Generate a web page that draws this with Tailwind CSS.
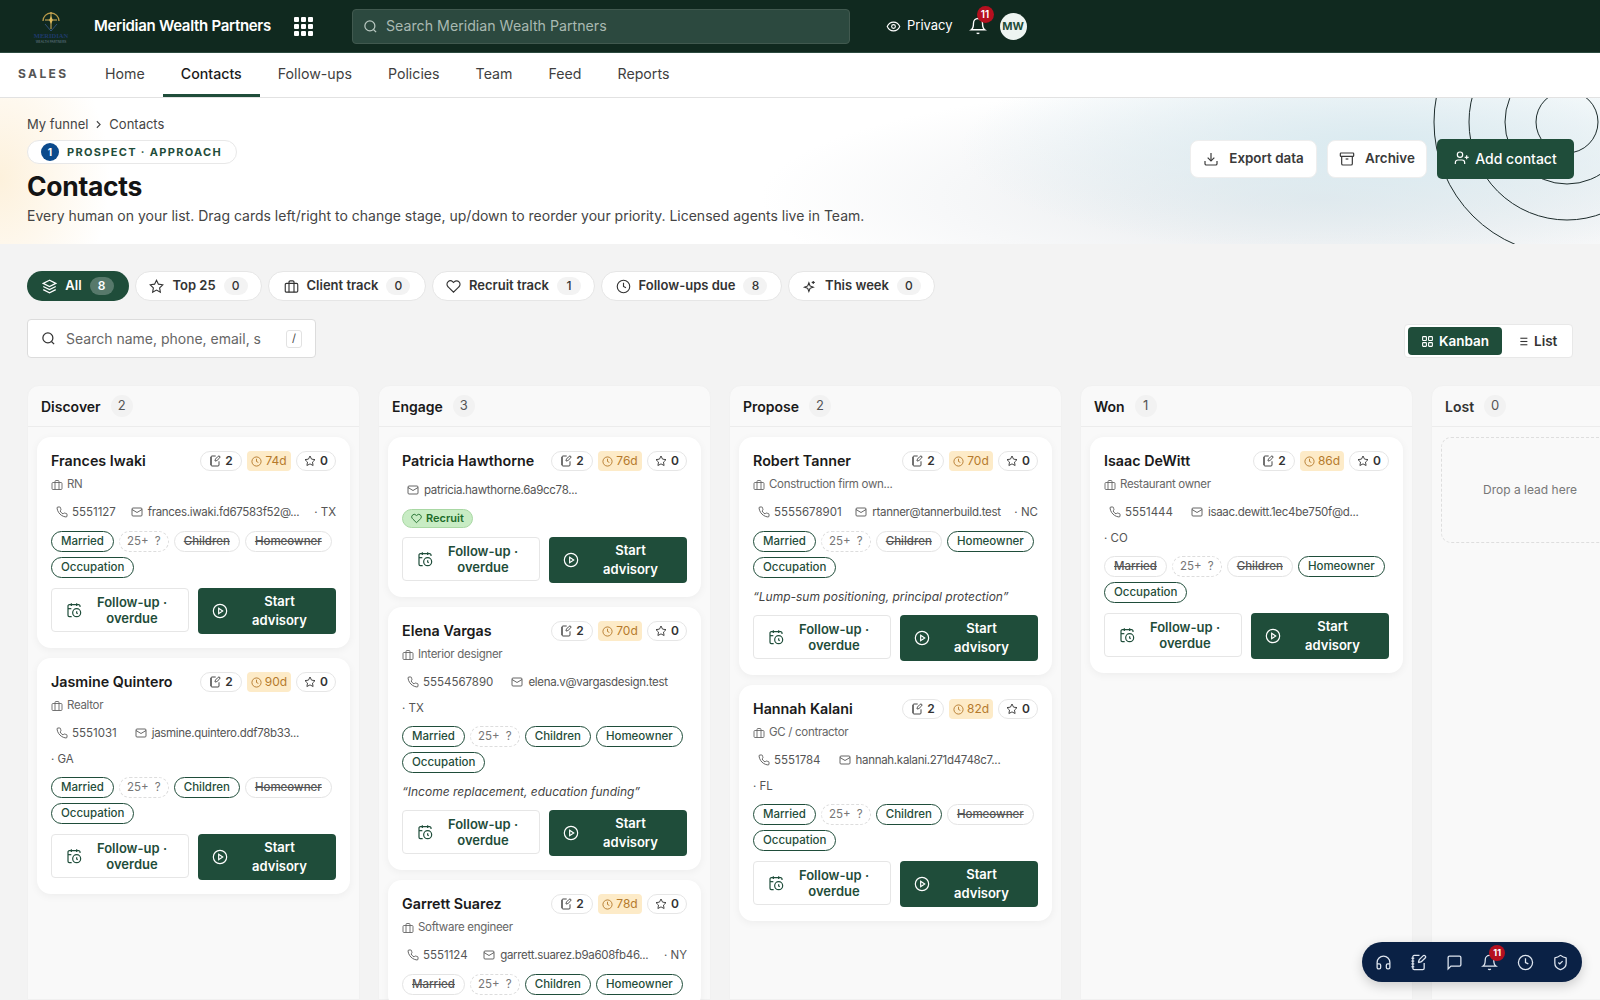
<!DOCTYPE html>
<html lang="en">
<head>
  <script src="https://cdn.jsdelivr.net/npm/@tailwindcss/browser@4"></script>
  <meta charset="UTF-8">
  <meta name="viewport" content="width=device-width, initial-scale=1.0">
  <title>Contacts</title>
</head>
<body class="bg-[#f3f3f3] font-['Inter',sans-serif] text-[#1a1a1a] h-[1000px] overflow-hidden">
  <!-- Icon sprites -->
  <svg class="hidden" xmlns="http://www.w3.org/2000/svg">
    <symbol id="i-search" viewBox="0 0 24 24"><circle cx="11" cy="11" r="8"/><path d="m21 21-4.3-4.3"/></symbol>
    <symbol id="i-eye" viewBox="0 0 24 24"><path d="M2 12s3-7 10-7 10 7 10 7-3 7-10 7-10-7-10-7z"/><circle cx="12" cy="12" r="3"/></symbol>
    <symbol id="i-bell" viewBox="0 0 24 24"><path d="M6 8a6 6 0 0 1 12 0c0 7 3 9 3 9H3s3-2 3-9"/><path d="M10.3 21a1.94 1.94 0 0 0 3.4 0"/></symbol>
    <symbol id="i-layers" viewBox="0 0 24 24"><path d="M12 2 2 7l10 5 10-5-10-5z"/><path d="m2 12 10 5 10-5"/><path d="m2 17 10 5 10-5"/></symbol>
    <symbol id="i-star" viewBox="0 0 24 24"><polygon points="12 2 15.09 8.26 22 9.27 17 14.14 18.18 21.02 12 17.77 5.82 21.02 7 14.14 2 9.27 8.91 8.26"/></symbol>
    <symbol id="i-case" viewBox="0 0 24 24"><rect x="2" y="7" width="20" height="14" rx="2"/><path d="M16 21V5a2 2 0 0 0-2-2h-4a2 2 0 0 0-2 2v16"/></symbol>
    <symbol id="i-heart" viewBox="0 0 24 24"><path d="M20.84 4.61a5.5 5.5 0 0 0-7.78 0L12 5.67l-1.06-1.06a5.5 5.5 0 0 0-7.78 7.78l1.06 1.06L12 21.23l7.78-7.78 1.06-1.06a5.5 5.5 0 0 0 0-7.78z"/></symbol>
    <symbol id="i-clock" viewBox="0 0 24 24"><circle cx="12" cy="12" r="10"/><path d="M12 6v6l4 2"/></symbol>
    <symbol id="i-spark" viewBox="0 0 24 24"><path d="M11 6l1.9 5.1L18 13l-5.1 1.9L11 20l-1.9-5.1L4 13l5.1-1.9z"/><path d="M18 3v5"/><path d="M15.5 5.500h5"/></symbol>
    <symbol id="i-download" viewBox="0 0 24 24"><path d="M21 15v4a2 2 0 0 1-2 2H5a2 2 0 0 1-2-2v-4"/><path d="m7 10 5 5 5-5"/><path d="M12 15V3"/></symbol>
    <symbol id="i-archive" viewBox="0 0 24 24"><rect x="2" y="3" width="20" height="5" rx="1"/><path d="M4 8v11a2 2 0 0 0 2 2h12a2 2 0 0 0 2-2V8"/><path d="M10 12h4"/></symbol>
    <symbol id="i-userplus" viewBox="0 0 24 24"><path d="M16 21v-2a4 4 0 0 0-4-4H6a4 4 0 0 0-4 4v2"/><circle cx="9" cy="7" r="4"/><path d="M19 8v6"/><path d="M22 11h-6"/></symbol>
    <symbol id="i-chevron" viewBox="0 0 24 24"><path d="m9 18 6-6-6-6"/></symbol>
    <symbol id="i-phone" viewBox="0 0 24 24"><path d="M22 16.920v3a2 2 0 0 1-2.180 2 19.790 19.790 0 0 1-8.630-3.070 19.500 19.500 0 0 1-6-6 19.790 19.790 0 0 1-3.070-8.670A2 2 0 0 1 4.110 2h3a2 2 0 0 1 2 1.720 12.840 12.840 0 0 0 .7 2.810 2 2 0 0 1-.45 2.110L8.090 9.910a16 16 0 0 0 6 6l1.270-1.270a2 2 0 0 1 2.110-.45 12.840 12.840 0 0 0 2.810.7A2 2 0 0 1 22 16.920z"/></symbol>
    <symbol id="i-mail" viewBox="0 0 24 24"><rect x="2" y="4" width="20" height="16" rx="2"/><path d="m22 7-10 6L2 7"/></symbol>
    <symbol id="i-note" viewBox="0 0 24 24"><path d="M13.400 2H6a2 2 0 0 0-2 2v16a2 2 0 0 0 2 2h12a2 2 0 0 0 2-2v-7.400"/><path d="M2 6h4"/><path d="M2 10h4"/><path d="M2 14h4"/><path d="M2 18h4"/><path d="M21.378 5.626a1 1 0 1 0-3.004-3.004l-5.010 5.012a2 2 0 0 0-.506.854l-.837 2.870a.5.5 0 0 0 .62.62l2.870-.837a2 2 0 0 0 .854-.506z"/></symbol>
    <symbol id="i-calclock" viewBox="0 0 24 24"><path d="M21 7.500V6a2 2 0 0 0-2-2H5a2 2 0 0 0-2 2v14a2 2 0 0 0 2 2h3.500"/><path d="M16 2v4"/><path d="M8 2v4"/><path d="M3 10h5"/><path d="M17.500 17.500 16 16.300V14"/><circle cx="16" cy="16" r="6"/></symbol>
    <symbol id="i-play" viewBox="0 0 24 24"><circle cx="12" cy="12" r="10"/><polygon points="10 8 16 12 10 16"/></symbol>
    <symbol id="i-grid" viewBox="0 0 24 24"><rect x="3" y="3" width="7" height="7" rx="1"/><rect x="14" y="3" width="7" height="7" rx="1"/><rect x="14" y="14" width="7" height="7" rx="1"/><rect x="3" y="14" width="7" height="7" rx="1"/></symbol>
    <symbol id="i-list" viewBox="0 0 24 24"><path d="M8 6h13"/><path d="M8 12h13"/><path d="M8 18h13"/><path d="M3 6h.01"/><path d="M3 12h.01"/><path d="M3 18h.01"/></symbol>
    <symbol id="i-headphones" viewBox="0 0 24 24"><path d="M3 14h3a2 2 0 0 1 2 2v3a2 2 0 0 1-2 2H5a2 2 0 0 1-2-2v-7a9 9 0 0 1 18 0v7a2 2 0 0 1-2 2h-1a2 2 0 0 1-2-2v-3a2 2 0 0 1 2-2h3"/></symbol>
    <symbol id="i-message" viewBox="0 0 24 24"><path d="M21 15a2 2 0 0 1-2 2H7l-4 4V5a2 2 0 0 1 2-2h14a2 2 0 0 1 2 2z"/></symbol>
    <symbol id="i-shield" viewBox="0 0 24 24"><path d="M20 13c0 5-3.500 7.500-7.660 8.950a1 1 0 0 1-.67-.01C7.500 20.500 4 18 4 13V6a1 1 0 0 1 1-1c2 0 4.500-1.200 6.240-2.720a1.170 1.170 0 0 1 1.520 0C14.510 3.810 17 5 19 5a1 1 0 0 1 1 1z"/><path d="m9 12 2 2 4-4"/></symbol>
  </svg>

  <!-- Top bar -->
  <div class="h-[53px] bg-[#10291f] flex items-center border-b border-[#2b4a3f]">
    <div class="w-[94px] pl-[30px] shrink-0">
      <svg width="42" height="38" viewBox="0 0 42 38" fill="none">
        <path d="M13 14a8 8 0 0 1 16 0" stroke="#b99a4a" stroke-width="1.300"/>
        <path d="M21 5v17M15 13h12" stroke="#d9b45a" stroke-width="1"/>
        <path d="M21 9l1.800 4-1.800 4-1.800-4z" fill="#e0bb5c"/>
        <path d="M15 17l6 7 6-7" stroke="#31507a" stroke-width="1"/>
        <text x="21" y="31" text-anchor="middle" font-size="6.500" font-weight="700" fill="#1f3a6b" font-family="Liberation Serif, serif">MERIDIAN</text>
        <text x="21" y="36" text-anchor="middle" font-size="3.200" fill="#6b7f8f" font-family="Inter, sans-serif">WEALTH PARTNERS</text>
      </svg>
    </div>
    <div class="text-white font-semibold text-[15px] tracking-[-0.3px] w-[179px] shrink-0 whitespace-nowrap">Meridian Wealth Partners</div>
    <div class="ml-[21px] grid grid-cols-3 gap-[2px] w-[19px] shrink-0">
      <span class="w-[5px] h-[5px] rounded-[1px] bg-white"></span><span class="w-[5px] h-[5px] rounded-[1px] bg-white"></span><span class="w-[5px] h-[5px] rounded-[1px] bg-white"></span>
      <span class="w-[5px] h-[5px] rounded-[1px] bg-white"></span><span class="w-[5px] h-[5px] rounded-[1px] bg-white"></span><span class="w-[5px] h-[5px] rounded-[1px] bg-white"></span>
      <span class="w-[5px] h-[5px] rounded-[1px] bg-white"></span><span class="w-[5px] h-[5px] rounded-[1px] bg-white"></span><span class="w-[5px] h-[5px] rounded-[1px] bg-white"></span>
    </div>
    <div class="ml-[39px] w-[498px] h-[35px] rounded-[4px] bg-[#2c493f] border border-[#41594f] flex items-center pl-[10px] gap-[8px] shrink-0">
      <svg class="w-[15px] h-[15px] text-[#b9c8c1]" fill="none" stroke="currentColor" stroke-width="2"><use href="#i-search"/></svg>
      <span class="text-[14.2px] text-[#a9b9b2]">Search Meridian Wealth Partners</span>
    </div>
    <div class="ml-[36px] flex items-center gap-[6px] text-white text-[13px]">
      <svg class="w-[15px] h-[15px]" fill="none" stroke="currentColor" stroke-width="1.800"><use href="#i-eye"/></svg>
      <span>Privacy</span>
    </div>
    <div class="relative ml-[16px] w-[18px] h-[18px]">
      <svg class="w-[18px] h-[18px] text-white" fill="none" stroke="currentColor" stroke-width="1.800"><use href="#i-bell"/></svg>
      <span class="absolute -top-[11px] left-[8px] w-[17px] h-[17px] rounded-full bg-[#b5101f] text-white text-[10px] font-semibold flex items-center justify-center">11</span>
    </div>
    <div class="ml-[13px] w-[27px] h-[27px] rounded-full bg-[#eef4f1] text-[#1f4d3a] text-[11px] font-bold flex items-center justify-center">MW</div>
  </div>

  <!-- Section tabs -->
  <div class="h-[45px] bg-white border-b border-[#e2e2e2] flex items-stretch">
    <div class="w-[87px] pl-[18px] pb-[3px] flex items-center text-[12px] font-bold tracking-[0.2em] text-[#555]">SALES</div>
    <a class="px-[18px] pb-[3px] flex items-center text-[14.2px] text-[#3f3f3f]">Home</a>
    <a class="px-[18px] flex items-center text-[14.2px] font-medium text-[#1a1a1a] border-b-[3px] border-[#1f4d3a]">Contacts</a>
    <a class="px-[18px] pb-[3px] flex items-center text-[14.2px] text-[#3f3f3f]">Follow-ups</a>
    <a class="px-[18px] pb-[3px] flex items-center text-[14.2px] text-[#3f3f3f]">Policies</a>
    <a class="px-[18px] pb-[3px] flex items-center text-[14.2px] text-[#3f3f3f]">Team</a>
    <a class="px-[18px] pb-[3px] flex items-center text-[14.2px] text-[#3f3f3f]">Feed</a>
    <a class="px-[18px] pb-[3px] flex items-center text-[14.2px] text-[#3f3f3f]">Reports</a>
  </div>

  <!-- Page head -->
  <div class="relative h-[146px] overflow-hidden bg-white px-[27px] bg-[radial-gradient(ellipse_420px_110px_at_1380px_50px,#d9eaf0_0%,transparent_100%),radial-gradient(ellipse_560px_120px_at_1320px_100px,#e6e9ec_0%,transparent_100%),radial-gradient(ellipse_110px_150px_at_0px_80px,#fdf1dc_0%,transparent_100%)]">
    <svg class="absolute left-[1400px] top-0 w-[200px] h-[146px]" viewBox="0 0 200 146" fill="none" stroke="#1c2b2b" stroke-width="1">
      <circle cx="167" cy="24" r="31"/>
      <circle cx="167" cy="24" r="62"/>
      <circle cx="167" cy="24" r="98"/>
      <circle cx="167" cy="24" r="133"/>
    </svg>
    <div class="relative flex items-center gap-[4px] pt-[16px] text-[13px] leading-[20px] text-[#444]">
      <span>My funnel</span>
      <svg class="w-[13px] h-[13px]" fill="none" stroke="currentColor" stroke-width="2"><use href="#i-chevron"/></svg>
      <span>Contacts</span>
    </div>
    <div class="relative mt-[6px] inline-flex items-center h-[24px] w-[210px] rounded-full bg-white border border-[#e8e8e8] pl-[13px] gap-[8px]">
      <span class="w-[18px] h-[18px] rounded-full bg-[#0b4a8c] text-white text-[10px] font-bold flex items-center justify-center">1</span>
      <span class="text-[11px] font-bold tracking-[0.12em] text-[#1f4d3a] whitespace-nowrap">PROSPECT · APPROACH</span>
    </div>
    <h1 class="relative mt-[5px] text-[26.5px] leading-[34px] font-bold tracking-[-0.3px] text-[#141414]">Contacts</h1>
    <p class="relative mt-[3px] text-[14px] leading-[20px] text-[#444]">Every human on your list. Drag cards left/right to change stage, up/down to reorder your priority. Licensed agents live in Team.</p>
    <div class="absolute right-[26px] top-[41px] flex items-center gap-[10px]">
      <button class="h-[38px] w-[127px] rounded-[8px] bg-white border border-[#eeeeee] pb-[1px] flex items-center justify-center gap-[10px] text-[13.4px] font-semibold text-[#3a3a3a]">
        <svg class="w-[16px] h-[16px]" fill="none" stroke="currentColor" stroke-width="1.800"><use href="#i-download"/></svg>Export data
      </button>
      <button class="h-[38px] w-[100px] rounded-[8px] bg-white border border-[#eeeeee] pb-[1px] flex items-center justify-center gap-[10px] text-[13.4px] font-semibold text-[#3a3a3a]">
        <svg class="w-[16px] h-[16px]" fill="none" stroke="currentColor" stroke-width="1.800"><use href="#i-archive"/></svg>Archive
      </button>
      <button class="h-[40px] w-[137px] rounded-[5px] bg-[#1f4d3a] pb-[2px] flex items-center justify-center gap-[5px] text-[14px] font-medium text-white">
        <svg class="w-[16px] h-[16px]" fill="none" stroke="currentColor" stroke-width="1.800"><use href="#i-userplus"/></svg>Add contact
      </button>
    </div>
  </div>

  <!-- Filter chips -->
  <div class="px-[27px] pt-[27px] flex items-center gap-[6px]">
    <div class="h-[30px] w-[102px] rounded-full bg-[#1f4d3a] text-white flex items-center justify-center gap-[8px] text-[13px] font-semibold">
      <svg class="w-[15px] h-[15px]" fill="none" stroke="currentColor" stroke-width="1.800"><use href="#i-layers"/></svg>All
      <span class="w-[24px] h-[18px] rounded-full bg-white/25 text-[12px] flex items-center justify-center">8</span>
    </div>
    <div class="h-[30px] w-[127px] rounded-full bg-white border border-[#e6e6e6] flex items-center justify-center gap-[8px] text-[13px] font-semibold text-[#333]">
      <svg class="w-[15px] h-[15px]" fill="none" stroke="currentColor" stroke-width="1.800"><use href="#i-star"/></svg>Top 25
      <span class="w-[24px] h-[18px] rounded-full bg-[#f3f3f3] text-[12px] font-medium flex items-center justify-center">0</span>
    </div>
    <div class="h-[30px] w-[158px] rounded-full bg-white border border-[#e6e6e6] flex items-center justify-center gap-[8px] text-[13px] font-semibold text-[#333]">
      <svg class="w-[15px] h-[15px]" fill="none" stroke="currentColor" stroke-width="1.800"><use href="#i-case"/></svg>Client track
      <span class="w-[24px] h-[18px] rounded-full bg-[#f3f3f3] text-[12px] font-medium flex items-center justify-center">0</span>
    </div>
    <div class="h-[30px] w-[163px] rounded-full bg-white border border-[#e6e6e6] flex items-center justify-center gap-[8px] text-[13px] font-semibold text-[#333]">
      <svg class="w-[15px] h-[15px]" fill="none" stroke="currentColor" stroke-width="1.800"><use href="#i-heart"/></svg>Recruit track
      <span class="w-[24px] h-[18px] rounded-full bg-[#f3f3f3] text-[12px] font-medium flex items-center justify-center">1</span>
    </div>
    <div class="h-[30px] w-[181px] rounded-full bg-white border border-[#e6e6e6] flex items-center justify-center gap-[8px] text-[13px] font-semibold text-[#333]">
      <svg class="w-[15px] h-[15px]" fill="none" stroke="currentColor" stroke-width="1.800"><use href="#i-clock"/></svg>Follow-ups due
      <span class="w-[24px] h-[18px] rounded-full bg-[#f3f3f3] text-[12px] font-medium flex items-center justify-center">8</span>
    </div>
    <div class="h-[30px] w-[147px] rounded-full bg-white border border-[#e6e6e6] flex items-center justify-center gap-[8px] text-[13px] font-semibold text-[#333]">
      <svg class="w-[15px] h-[15px]" fill="none" stroke="currentColor" stroke-width="1.800"><use href="#i-spark"/></svg>This week
      <span class="w-[24px] h-[18px] rounded-full bg-[#f3f3f3] text-[12px] font-medium flex items-center justify-center">0</span>
    </div>
  </div>

  <!-- Search + view toggle -->
  <div class="px-[27px] mt-[18px] flex items-end justify-between">
    <div class="w-[289px] h-[39px] rounded-[4px] bg-white border border-[#dcdcdc] flex items-center pl-[13px] pr-[13px] gap-[10px]">
      <svg class="w-[15px] h-[15px] text-[#333]" fill="none" stroke="currentColor" stroke-width="2"><use href="#i-search"/></svg>
      <span class="flex-1 text-[14px] text-[#666] whitespace-nowrap overflow-hidden">Search name, phone, email, s</span>
      <span class="w-[16px] h-[18px] rounded-[3px] border border-[#e2e2e2] text-[11px] text-[#444] flex items-center justify-center">/</span>
    </div>
    <div class="w-[169px] h-[34px] rounded-[4px] bg-white border border-[#e8e8e8] flex items-center pl-[3px] gap-[14px]">
      <div class="w-[94px] h-[28px] rounded-[4px] bg-[#1f4d3a] text-white text-[13.5px] font-semibold flex items-center justify-center gap-[5px]">
        <svg class="w-[13px] h-[13px]" fill="none" stroke="currentColor" stroke-width="2"><use href="#i-grid"/></svg>Kanban
      </div>
      <div class="flex items-center gap-[5px] text-[13.5px] font-semibold text-[#333]">
        <svg class="w-[13px] h-[13px]" fill="none" stroke="currentColor" stroke-width="2"><use href="#i-list"/></svg>List
      </div>
    </div>
  </div>

  <!-- Board -->
  <div class="mt-[27px] pl-[27px] flex gap-[18px] items-stretch h-[615px] overflow-hidden">

    <!-- Discover -->
    <div class="w-[333px] shrink-0 rounded-t-[12px] bg-[#f9f9f9] border border-[#f1f1f1]">
      <div class="h-[41px] px-[13px] flex items-center gap-[10px] border-b border-[#ececec]">
        <span class="text-[14px] font-semibold">Discover</span>
        <span class="w-[22px] h-[22px] rounded-full bg-[#f2f2f2] text-[13px] text-[#555] flex items-center justify-center">2</span>
      </div>
      <div class="px-[9px] pt-[10px] flex flex-col gap-[10px]">

        <div class="rounded-[14px] bg-white shadow-[0_2px_8px_rgba(0,0,0,0.05)] p-[14px]">
          <div class="flex items-center justify-between">
            <span class="text-[14.3px] leading-[20px] font-semibold whitespace-nowrap">Frances Iwaki</span>
            <div class="flex items-center gap-[5px]">
              <span class="h-[20px] w-[42px] rounded-full border border-[#e6e6e6] flex items-center justify-center gap-[4px] text-[12px] font-semibold text-[#333]"><svg class="w-[12px] h-[12px]" fill="none" stroke="currentColor" stroke-width="1.800"><use href="#i-note"/></svg>2</span>
              <span class="h-[20px] w-[44px] rounded-[4px] bg-[#fdebc8] flex items-center justify-center gap-[3px] text-[12px] text-[#b57a2c]"><svg class="w-[11px] h-[11px]" fill="none" stroke="currentColor" stroke-width="2"><use href="#i-clock"/></svg>74d</span>
              <span class="h-[20px] w-[40px] rounded-full border border-[#e6e6e6] flex items-center justify-center gap-[4px] text-[12px] font-semibold text-[#333]"><svg class="w-[12px] h-[12px]" fill="none" stroke="currentColor" stroke-width="1.800"><use href="#i-star"/></svg>0</span>
            </div>
          </div>
          <div class="mt-[6px] h-[16px] flex items-center gap-[4px] text-[11.5px] tracking-[-0.3px] text-[#666]"><svg class="w-[12px] h-[12px]" fill="none" stroke="currentColor" stroke-width="1.800"><use href="#i-case"/></svg>RN</div>
          <div class="mt-[10px] flex flex-wrap justify-between gap-y-[8px] text-[11.5px] leading-[18px] text-[#555]">
            <span class="flex items-center gap-[4px] ml-[5px]"><svg class="w-[12px] h-[12px]" fill="none" stroke="currentColor" stroke-width="1.800"><use href="#i-phone"/></svg>5551127</span>
            <span class="flex items-center gap-[5px] tracking-[-0.3px]"><svg class="w-[12px] h-[12px]" fill="none" stroke="currentColor" stroke-width="1.800"><use href="#i-mail"/></svg>frances.iwaki.fd67583f52@...</span>
            <span>· TX</span>
          </div>
          <div class="mt-[10px] flex flex-wrap gap-x-[5px] gap-y-[5px] text-[11.5px] font-medium">
            <span class="h-[21px] px-[9px] rounded-full border-[1.5px] border-[#1f4d3a] text-[#1f4d3a] flex items-center">Married</span>
            <span class="h-[21px] px-[7px] rounded-full border border-dashed border-[#dddddd] text-[#777] font-normal [word-spacing:3px] flex items-center">25+ ?</span>
            <span class="h-[21px] px-[9px] rounded-full border border-[#e4e4e4] text-[#555] line-through flex items-center">Children</span>
            <span class="h-[21px] px-[9px] rounded-full border border-[#e4e4e4] text-[#555] line-through flex items-center">Homeowner</span>
            <span class="h-[21px] px-[9px] rounded-full border-[1.5px] border-[#1f4d3a] text-[#1f4d3a] flex items-center">Occupation</span>
          </div>
          <div class="mt-[10px] flex items-start gap-[9px] text-[13px] font-semibold">
            <button class="w-[138px] h-[44px] rounded-[4px] border border-[#e6e6e6] bg-white text-[#1f4d3a] flex items-center pl-[14px] pr-[14px] gap-[8px]"><svg class="w-[16px] h-[16px] shrink-0" fill="none" stroke="currentColor" stroke-width="1.800"><use href="#i-calclock"/></svg><span class="flex-1 text-center leading-[16.500px]">Follow-up · overdue</span></button>
            <button class="w-[138px] h-[46px] rounded-[4px] bg-[#1f4d3a] text-white flex items-center pl-[14px] pr-[14px] gap-[9px]"><svg class="w-[16px] h-[16px] shrink-0" fill="none" stroke="currentColor" stroke-width="1.800"><use href="#i-play"/></svg><span class="flex-1 text-center leading-[19px]">Start advisory</span></button>
          </div>
        </div>

        <div class="rounded-[14px] bg-white shadow-[0_2px_8px_rgba(0,0,0,0.05)] p-[14px]">
          <div class="flex items-center justify-between">
            <span class="text-[14.3px] leading-[20px] font-semibold whitespace-nowrap">Jasmine Quintero</span>
            <div class="flex items-center gap-[5px]">
              <span class="h-[20px] w-[42px] rounded-full border border-[#e6e6e6] flex items-center justify-center gap-[4px] text-[12px] font-semibold text-[#333]"><svg class="w-[12px] h-[12px]" fill="none" stroke="currentColor" stroke-width="1.800"><use href="#i-note"/></svg>2</span>
              <span class="h-[20px] w-[44px] rounded-[4px] bg-[#fdebc8] flex items-center justify-center gap-[3px] text-[12px] text-[#b57a2c]"><svg class="w-[11px] h-[11px]" fill="none" stroke="currentColor" stroke-width="2"><use href="#i-clock"/></svg>90d</span>
              <span class="h-[20px] w-[40px] rounded-full border border-[#e6e6e6] flex items-center justify-center gap-[4px] text-[12px] font-semibold text-[#333]"><svg class="w-[12px] h-[12px]" fill="none" stroke="currentColor" stroke-width="1.800"><use href="#i-star"/></svg>0</span>
            </div>
          </div>
          <div class="mt-[6px] h-[16px] flex items-center gap-[4px] text-[11.5px] tracking-[-0.3px] text-[#666]"><svg class="w-[12px] h-[12px]" fill="none" stroke="currentColor" stroke-width="1.800"><use href="#i-case"/></svg>Realtor</div>
          <div class="mt-[10px] flex flex-wrap gap-x-[18px] gap-y-[8px] text-[11.5px] leading-[18px] text-[#555]">
            <span class="flex items-center gap-[4px] ml-[5px]"><svg class="w-[12px] h-[12px]" fill="none" stroke="currentColor" stroke-width="1.800"><use href="#i-phone"/></svg>5551031</span>
            <span class="flex items-center gap-[5px] tracking-[-0.3px]"><svg class="w-[12px] h-[12px]" fill="none" stroke="currentColor" stroke-width="1.800"><use href="#i-mail"/></svg>jasmine.quintero.ddf78b33...</span>
            <span class="w-full">· GA</span>
          </div>
          <div class="mt-[9px] flex flex-wrap gap-x-[5px] gap-y-[5px] text-[11.5px] font-medium">
            <span class="h-[21px] px-[9px] rounded-full border-[1.5px] border-[#1f4d3a] text-[#1f4d3a] flex items-center">Married</span>
            <span class="h-[21px] px-[7px] rounded-full border border-dashed border-[#dddddd] text-[#777] font-normal [word-spacing:3px] flex items-center">25+ ?</span>
            <span class="h-[21px] px-[9px] rounded-full border-[1.5px] border-[#1f4d3a] text-[#1f4d3a] flex items-center">Children</span>
            <span class="h-[21px] px-[9px] rounded-full border border-[#e4e4e4] text-[#555] line-through flex items-center">Homeowner</span>
            <span class="h-[21px] px-[9px] rounded-full border-[1.5px] border-[#1f4d3a] text-[#1f4d3a] flex items-center">Occupation</span>
          </div>
          <div class="mt-[10px] flex items-start gap-[9px] text-[13px] font-semibold">
            <button class="w-[138px] h-[44px] rounded-[4px] border border-[#e6e6e6] bg-white text-[#1f4d3a] flex items-center pl-[14px] pr-[14px] gap-[8px]"><svg class="w-[16px] h-[16px] shrink-0" fill="none" stroke="currentColor" stroke-width="1.800"><use href="#i-calclock"/></svg><span class="flex-1 text-center leading-[16.500px]">Follow-up · overdue</span></button>
            <button class="w-[138px] h-[46px] rounded-[4px] bg-[#1f4d3a] text-white flex items-center pl-[14px] pr-[14px] gap-[9px]"><svg class="w-[16px] h-[16px] shrink-0" fill="none" stroke="currentColor" stroke-width="1.800"><use href="#i-play"/></svg><span class="flex-1 text-center leading-[19px]">Start advisory</span></button>
          </div>
        </div>
      </div>
    </div>

    <!-- Engage -->
    <div class="w-[333px] shrink-0 rounded-t-[12px] bg-[#f9f9f9] border border-[#f1f1f1]">
      <div class="h-[41px] px-[13px] flex items-center gap-[10px] border-b border-[#ececec]">
        <span class="text-[14px] font-semibold">Engage</span>
        <span class="w-[22px] h-[22px] rounded-full bg-[#f2f2f2] text-[13px] text-[#555] flex items-center justify-center">3</span>
      </div>
      <div class="px-[9px] pt-[10px] flex flex-col gap-[10px]">

        <div class="rounded-[14px] bg-white shadow-[0_2px_8px_rgba(0,0,0,0.05)] p-[14px]">
          <div class="flex items-center justify-between">
            <span class="text-[14.3px] leading-[20px] font-semibold whitespace-nowrap">Patricia Hawthorne</span>
            <div class="flex items-center gap-[5px]">
              <span class="h-[20px] w-[42px] rounded-full border border-[#e6e6e6] flex items-center justify-center gap-[4px] text-[12px] font-semibold text-[#333]"><svg class="w-[12px] h-[12px]" fill="none" stroke="currentColor" stroke-width="1.800"><use href="#i-note"/></svg>2</span>
              <span class="h-[20px] w-[44px] rounded-[4px] bg-[#fdebc8] flex items-center justify-center gap-[3px] text-[12px] text-[#b57a2c]"><svg class="w-[11px] h-[11px]" fill="none" stroke="currentColor" stroke-width="2"><use href="#i-clock"/></svg>76d</span>
              <span class="h-[20px] w-[40px] rounded-full border border-[#e6e6e6] flex items-center justify-center gap-[4px] text-[12px] font-semibold text-[#333]"><svg class="w-[12px] h-[12px]" fill="none" stroke="currentColor" stroke-width="1.800"><use href="#i-star"/></svg>0</span>
            </div>
          </div>
          <div class="mt-[10px] flex flex-wrap gap-x-[18px] gap-y-[8px] text-[11.5px] leading-[18px] text-[#555]">
            <span class="flex items-center gap-[5px] ml-[5px] tracking-[-0.3px]"><svg class="w-[12px] h-[12px]" fill="none" stroke="currentColor" stroke-width="1.800"><use href="#i-mail"/></svg>patricia.hawthorne.6a9cc78...</span>
          </div>
          <div class="mt-[10px] flex">
            <span class="h-[19px] px-[8px] rounded-full border border-[#a9d8a4] bg-[#c8ecc4] text-[#1c6b2a] text-[11px] font-semibold flex items-center gap-[4px]"><svg class="w-[11px] h-[11px]" fill="none" stroke="currentColor" stroke-width="2"><use href="#i-heart"/></svg>Recruit</span>
          </div>
          <div class="mt-[9px] flex items-start gap-[9px] text-[13px] font-semibold">
            <button class="w-[138px] h-[44px] rounded-[4px] border border-[#e6e6e6] bg-white text-[#1f4d3a] flex items-center pl-[14px] pr-[14px] gap-[8px]"><svg class="w-[16px] h-[16px] shrink-0" fill="none" stroke="currentColor" stroke-width="1.800"><use href="#i-calclock"/></svg><span class="flex-1 text-center leading-[16.500px]">Follow-up · overdue</span></button>
            <button class="w-[138px] h-[46px] rounded-[4px] bg-[#1f4d3a] text-white flex items-center pl-[14px] pr-[14px] gap-[9px]"><svg class="w-[16px] h-[16px] shrink-0" fill="none" stroke="currentColor" stroke-width="1.800"><use href="#i-play"/></svg><span class="flex-1 text-center leading-[19px]">Start advisory</span></button>
          </div>
        </div>

        <div class="rounded-[14px] bg-white shadow-[0_2px_8px_rgba(0,0,0,0.05)] p-[14px]">
          <div class="flex items-center justify-between">
            <span class="text-[14.3px] leading-[20px] font-semibold whitespace-nowrap">Elena Vargas</span>
            <div class="flex items-center gap-[5px]">
              <span class="h-[20px] w-[42px] rounded-full border border-[#e6e6e6] flex items-center justify-center gap-[4px] text-[12px] font-semibold text-[#333]"><svg class="w-[12px] h-[12px]" fill="none" stroke="currentColor" stroke-width="1.800"><use href="#i-note"/></svg>2</span>
              <span class="h-[20px] w-[44px] rounded-[4px] bg-[#fdebc8] flex items-center justify-center gap-[3px] text-[12px] text-[#b57a2c]"><svg class="w-[11px] h-[11px]" fill="none" stroke="currentColor" stroke-width="2"><use href="#i-clock"/></svg>70d</span>
              <span class="h-[20px] w-[40px] rounded-full border border-[#e6e6e6] flex items-center justify-center gap-[4px] text-[12px] font-semibold text-[#333]"><svg class="w-[12px] h-[12px]" fill="none" stroke="currentColor" stroke-width="1.800"><use href="#i-star"/></svg>0</span>
            </div>
          </div>
          <div class="mt-[6px] h-[16px] flex items-center gap-[4px] text-[11.5px] tracking-[-0.3px] text-[#666]"><svg class="w-[12px] h-[12px]" fill="none" stroke="currentColor" stroke-width="1.800"><use href="#i-case"/></svg>Interior designer</div>
          <div class="mt-[10px] flex flex-wrap gap-x-[18px] gap-y-[8px] text-[11.5px] leading-[18px] text-[#555]">
            <span class="flex items-center gap-[4px] ml-[5px]"><svg class="w-[12px] h-[12px]" fill="none" stroke="currentColor" stroke-width="1.800"><use href="#i-phone"/></svg>5554567890</span>
            <span class="flex items-center gap-[5px] tracking-[-0.3px]"><svg class="w-[12px] h-[12px]" fill="none" stroke="currentColor" stroke-width="1.800"><use href="#i-mail"/></svg>elena.v@vargasdesign.test</span>
            <span class="w-full">· TX</span>
          </div>
          <div class="mt-[9px] flex flex-wrap gap-x-[5px] gap-y-[5px] text-[11.5px] font-medium">
            <span class="h-[21px] px-[9px] rounded-full border-[1.5px] border-[#1f4d3a] text-[#1f4d3a] flex items-center">Married</span>
            <span class="h-[21px] px-[7px] rounded-full border border-dashed border-[#dddddd] text-[#777] font-normal [word-spacing:3px] flex items-center">25+ ?</span>
            <span class="h-[21px] px-[9px] rounded-full border-[1.5px] border-[#1f4d3a] text-[#1f4d3a] flex items-center">Children</span>
            <span class="h-[21px] px-[9px] rounded-full border-[1.5px] border-[#1f4d3a] text-[#1f4d3a] flex items-center">Homeowner</span>
            <span class="h-[21px] px-[9px] rounded-full border-[1.5px] border-[#1f4d3a] text-[#1f4d3a] flex items-center">Occupation</span>
          </div>
          <p class="mt-[10px] text-[12px] leading-[17px] italic text-[#444]">“Income replacement, education funding”</p>
          <div class="mt-[10px] flex items-start gap-[9px] text-[13px] font-semibold">
            <button class="w-[138px] h-[44px] rounded-[4px] border border-[#e6e6e6] bg-white text-[#1f4d3a] flex items-center pl-[14px] pr-[14px] gap-[8px]"><svg class="w-[16px] h-[16px] shrink-0" fill="none" stroke="currentColor" stroke-width="1.800"><use href="#i-calclock"/></svg><span class="flex-1 text-center leading-[16.500px]">Follow-up · overdue</span></button>
            <button class="w-[138px] h-[46px] rounded-[4px] bg-[#1f4d3a] text-white flex items-center pl-[14px] pr-[14px] gap-[9px]"><svg class="w-[16px] h-[16px] shrink-0" fill="none" stroke="currentColor" stroke-width="1.800"><use href="#i-play"/></svg><span class="flex-1 text-center leading-[19px]">Start advisory</span></button>
          </div>
        </div>

        <div class="rounded-[14px] bg-white shadow-[0_2px_8px_rgba(0,0,0,0.05)] p-[14px]">
          <div class="flex items-center justify-between">
            <span class="text-[14.3px] leading-[20px] font-semibold whitespace-nowrap">Garrett Suarez</span>
            <div class="flex items-center gap-[5px]">
              <span class="h-[20px] w-[42px] rounded-full border border-[#e6e6e6] flex items-center justify-center gap-[4px] text-[12px] font-semibold text-[#333]"><svg class="w-[12px] h-[12px]" fill="none" stroke="currentColor" stroke-width="1.800"><use href="#i-note"/></svg>2</span>
              <span class="h-[20px] w-[44px] rounded-[4px] bg-[#fdebc8] flex items-center justify-center gap-[3px] text-[12px] text-[#b57a2c]"><svg class="w-[11px] h-[11px]" fill="none" stroke="currentColor" stroke-width="2"><use href="#i-clock"/></svg>78d</span>
              <span class="h-[20px] w-[40px] rounded-full border border-[#e6e6e6] flex items-center justify-center gap-[4px] text-[12px] font-semibold text-[#333]"><svg class="w-[12px] h-[12px]" fill="none" stroke="currentColor" stroke-width="1.800"><use href="#i-star"/></svg>0</span>
            </div>
          </div>
          <div class="mt-[6px] h-[16px] flex items-center gap-[4px] text-[11.5px] tracking-[-0.3px] text-[#666]"><svg class="w-[12px] h-[12px]" fill="none" stroke="currentColor" stroke-width="1.800"><use href="#i-case"/></svg>Software engineer</div>
          <div class="mt-[10px] flex flex-wrap justify-between gap-y-[8px] text-[11.5px] leading-[18px] text-[#555]">
            <span class="flex items-center gap-[4px] ml-[5px]"><svg class="w-[12px] h-[12px]" fill="none" stroke="currentColor" stroke-width="1.800"><use href="#i-phone"/></svg>5551124</span>
            <span class="flex items-center gap-[5px] tracking-[-0.3px]"><svg class="w-[12px] h-[12px]" fill="none" stroke="currentColor" stroke-width="1.800"><use href="#i-mail"/></svg>garrett.suarez.b9a608fb46...</span>
            <span>· NY</span>
          </div>
          <div class="mt-[10px] flex flex-wrap gap-x-[5px] gap-y-[5px] text-[11.5px] font-medium">
            <span class="h-[21px] px-[9px] rounded-full border border-[#e4e4e4] text-[#555] line-through flex items-center">Married</span>
            <span class="h-[21px] px-[7px] rounded-full border border-dashed border-[#dddddd] text-[#777] font-normal [word-spacing:3px] flex items-center">25+ ?</span>
            <span class="h-[21px] px-[9px] rounded-full border-[1.5px] border-[#1f4d3a] text-[#1f4d3a] flex items-center">Children</span>
            <span class="h-[21px] px-[9px] rounded-full border-[1.5px] border-[#1f4d3a] text-[#1f4d3a] flex items-center">Homeowner</span>
          </div>
        </div>
      </div>
    </div>

    <!-- Propose -->
    <div class="w-[333px] shrink-0 rounded-t-[12px] bg-[#f9f9f9] border border-[#f1f1f1]">
      <div class="h-[41px] px-[13px] flex items-center gap-[10px] border-b border-[#ececec]">
        <span class="text-[14px] font-semibold">Propose</span>
        <span class="w-[22px] h-[22px] rounded-full bg-[#f2f2f2] text-[13px] text-[#555] flex items-center justify-center">2</span>
      </div>
      <div class="px-[9px] pt-[10px] flex flex-col gap-[10px]">

        <div class="rounded-[14px] bg-white shadow-[0_2px_8px_rgba(0,0,0,0.05)] p-[14px]">
          <div class="flex items-center justify-between">
            <span class="text-[14.3px] leading-[20px] font-semibold whitespace-nowrap">Robert Tanner</span>
            <div class="flex items-center gap-[5px]">
              <span class="h-[20px] w-[42px] rounded-full border border-[#e6e6e6] flex items-center justify-center gap-[4px] text-[12px] font-semibold text-[#333]"><svg class="w-[12px] h-[12px]" fill="none" stroke="currentColor" stroke-width="1.800"><use href="#i-note"/></svg>2</span>
              <span class="h-[20px] w-[44px] rounded-[4px] bg-[#fdebc8] flex items-center justify-center gap-[3px] text-[12px] text-[#b57a2c]"><svg class="w-[11px] h-[11px]" fill="none" stroke="currentColor" stroke-width="2"><use href="#i-clock"/></svg>70d</span>
              <span class="h-[20px] w-[40px] rounded-full border border-[#e6e6e6] flex items-center justify-center gap-[4px] text-[12px] font-semibold text-[#333]"><svg class="w-[12px] h-[12px]" fill="none" stroke="currentColor" stroke-width="1.800"><use href="#i-star"/></svg>0</span>
            </div>
          </div>
          <div class="mt-[6px] h-[16px] flex items-center gap-[4px] text-[11.5px] tracking-[-0.3px] text-[#666]"><svg class="w-[12px] h-[12px]" fill="none" stroke="currentColor" stroke-width="1.800"><use href="#i-case"/></svg>Construction firm own...</div>
          <div class="mt-[10px] flex flex-wrap justify-between gap-y-[8px] text-[11.5px] leading-[18px] text-[#555]">
            <span class="flex items-center gap-[4px] ml-[5px]"><svg class="w-[12px] h-[12px]" fill="none" stroke="currentColor" stroke-width="1.800"><use href="#i-phone"/></svg>5555678901</span>
            <span class="flex items-center gap-[5px] tracking-[-0.3px]"><svg class="w-[12px] h-[12px]" fill="none" stroke="currentColor" stroke-width="1.800"><use href="#i-mail"/></svg>rtanner@tannerbuild.test</span>
            <span>· NC</span>
          </div>
          <div class="mt-[10px] flex flex-wrap gap-x-[5px] gap-y-[5px] text-[11.5px] font-medium">
            <span class="h-[21px] px-[9px] rounded-full border-[1.5px] border-[#1f4d3a] text-[#1f4d3a] flex items-center">Married</span>
            <span class="h-[21px] px-[7px] rounded-full border border-dashed border-[#dddddd] text-[#777] font-normal [word-spacing:3px] flex items-center">25+ ?</span>
            <span class="h-[21px] px-[9px] rounded-full border border-[#e4e4e4] text-[#555] line-through flex items-center">Children</span>
            <span class="h-[21px] px-[9px] rounded-full border-[1.5px] border-[#1f4d3a] text-[#1f4d3a] flex items-center">Homeowner</span>
            <span class="h-[21px] px-[9px] rounded-full border-[1.5px] border-[#1f4d3a] text-[#1f4d3a] flex items-center">Occupation</span>
          </div>
          <p class="mt-[10px] text-[12px] leading-[17px] italic text-[#444]">“Lump-sum positioning, principal protection”</p>
          <div class="mt-[10px] flex items-start gap-[9px] text-[13px] font-semibold">
            <button class="w-[138px] h-[44px] rounded-[4px] border border-[#e6e6e6] bg-white text-[#1f4d3a] flex items-center pl-[14px] pr-[14px] gap-[8px]"><svg class="w-[16px] h-[16px] shrink-0" fill="none" stroke="currentColor" stroke-width="1.800"><use href="#i-calclock"/></svg><span class="flex-1 text-center leading-[16.500px]">Follow-up · overdue</span></button>
            <button class="w-[138px] h-[46px] rounded-[4px] bg-[#1f4d3a] text-white flex items-center pl-[14px] pr-[14px] gap-[9px]"><svg class="w-[16px] h-[16px] shrink-0" fill="none" stroke="currentColor" stroke-width="1.800"><use href="#i-play"/></svg><span class="flex-1 text-center leading-[19px]">Start advisory</span></button>
          </div>
        </div>

        <div class="rounded-[14px] bg-white shadow-[0_2px_8px_rgba(0,0,0,0.05)] p-[14px]">
          <div class="flex items-center justify-between">
            <span class="text-[14.3px] leading-[20px] font-semibold whitespace-nowrap">Hannah Kalani</span>
            <div class="flex items-center gap-[5px]">
              <span class="h-[20px] w-[42px] rounded-full border border-[#e6e6e6] flex items-center justify-center gap-[4px] text-[12px] font-semibold text-[#333]"><svg class="w-[12px] h-[12px]" fill="none" stroke="currentColor" stroke-width="1.800"><use href="#i-note"/></svg>2</span>
              <span class="h-[20px] w-[44px] rounded-[4px] bg-[#fdebc8] flex items-center justify-center gap-[3px] text-[12px] text-[#b57a2c]"><svg class="w-[11px] h-[11px]" fill="none" stroke="currentColor" stroke-width="2"><use href="#i-clock"/></svg>82d</span>
              <span class="h-[20px] w-[40px] rounded-full border border-[#e6e6e6] flex items-center justify-center gap-[4px] text-[12px] font-semibold text-[#333]"><svg class="w-[12px] h-[12px]" fill="none" stroke="currentColor" stroke-width="1.800"><use href="#i-star"/></svg>0</span>
            </div>
          </div>
          <div class="mt-[6px] h-[16px] flex items-center gap-[4px] text-[11.5px] tracking-[-0.3px] text-[#666]"><svg class="w-[12px] h-[12px]" fill="none" stroke="currentColor" stroke-width="1.800"><use href="#i-case"/></svg>GC / contractor</div>
          <div class="mt-[10px] flex flex-wrap gap-x-[18px] gap-y-[8px] text-[11.5px] leading-[18px] text-[#555]">
            <span class="flex items-center gap-[4px] ml-[5px]"><svg class="w-[12px] h-[12px]" fill="none" stroke="currentColor" stroke-width="1.800"><use href="#i-phone"/></svg>5551784</span>
            <span class="flex items-center gap-[5px] tracking-[-0.3px]"><svg class="w-[12px] h-[12px]" fill="none" stroke="currentColor" stroke-width="1.800"><use href="#i-mail"/></svg>hannah.kalani.271d4748c7...</span>
            <span class="w-full">· FL</span>
          </div>
          <div class="mt-[9px] flex flex-wrap gap-x-[5px] gap-y-[5px] text-[11.5px] font-medium">
            <span class="h-[21px] px-[9px] rounded-full border-[1.5px] border-[#1f4d3a] text-[#1f4d3a] flex items-center">Married</span>
            <span class="h-[21px] px-[7px] rounded-full border border-dashed border-[#dddddd] text-[#777] font-normal [word-spacing:3px] flex items-center">25+ ?</span>
            <span class="h-[21px] px-[9px] rounded-full border-[1.5px] border-[#1f4d3a] text-[#1f4d3a] flex items-center">Children</span>
            <span class="h-[21px] px-[9px] rounded-full border border-[#e4e4e4] text-[#555] line-through flex items-center">Homeowner</span>
            <span class="h-[21px] px-[9px] rounded-full border-[1.5px] border-[#1f4d3a] text-[#1f4d3a] flex items-center">Occupation</span>
          </div>
          <div class="mt-[10px] flex items-start gap-[9px] text-[13px] font-semibold">
            <button class="w-[138px] h-[44px] rounded-[4px] border border-[#e6e6e6] bg-white text-[#1f4d3a] flex items-center pl-[14px] pr-[14px] gap-[8px]"><svg class="w-[16px] h-[16px] shrink-0" fill="none" stroke="currentColor" stroke-width="1.800"><use href="#i-calclock"/></svg><span class="flex-1 text-center leading-[16.500px]">Follow-up · overdue</span></button>
            <button class="w-[138px] h-[46px] rounded-[4px] bg-[#1f4d3a] text-white flex items-center pl-[14px] pr-[14px] gap-[9px]"><svg class="w-[16px] h-[16px] shrink-0" fill="none" stroke="currentColor" stroke-width="1.800"><use href="#i-play"/></svg><span class="flex-1 text-center leading-[19px]">Start advisory</span></button>
          </div>
        </div>
      </div>
    </div>

    <!-- Won -->
    <div class="w-[333px] shrink-0 rounded-t-[12px] bg-[#f9f9f9] border border-[#f1f1f1]">
      <div class="h-[41px] px-[13px] flex items-center gap-[10px] border-b border-[#ececec]">
        <span class="text-[14px] font-semibold">Won</span>
        <span class="w-[22px] h-[22px] rounded-full bg-[#f2f2f2] text-[13px] text-[#555] flex items-center justify-center">1</span>
      </div>
      <div class="px-[9px] pt-[10px] flex flex-col gap-[10px]">

        <div class="rounded-[14px] bg-white shadow-[0_2px_8px_rgba(0,0,0,0.05)] p-[14px]">
          <div class="flex items-center justify-between">
            <span class="text-[14.3px] leading-[20px] font-semibold whitespace-nowrap">Isaac DeWitt</span>
            <div class="flex items-center gap-[5px]">
              <span class="h-[20px] w-[42px] rounded-full border border-[#e6e6e6] flex items-center justify-center gap-[4px] text-[12px] font-semibold text-[#333]"><svg class="w-[12px] h-[12px]" fill="none" stroke="currentColor" stroke-width="1.800"><use href="#i-note"/></svg>2</span>
              <span class="h-[20px] w-[44px] rounded-[4px] bg-[#fdebc8] flex items-center justify-center gap-[3px] text-[12px] text-[#b57a2c]"><svg class="w-[11px] h-[11px]" fill="none" stroke="currentColor" stroke-width="2"><use href="#i-clock"/></svg>86d</span>
              <span class="h-[20px] w-[40px] rounded-full border border-[#e6e6e6] flex items-center justify-center gap-[4px] text-[12px] font-semibold text-[#333]"><svg class="w-[12px] h-[12px]" fill="none" stroke="currentColor" stroke-width="1.800"><use href="#i-star"/></svg>0</span>
            </div>
          </div>
          <div class="mt-[6px] h-[16px] flex items-center gap-[4px] text-[11.5px] tracking-[-0.3px] text-[#666]"><svg class="w-[12px] h-[12px]" fill="none" stroke="currentColor" stroke-width="1.800"><use href="#i-case"/></svg>Restaurant owner</div>
          <div class="mt-[10px] flex flex-wrap gap-x-[18px] gap-y-[8px] text-[11.5px] leading-[18px] text-[#555]">
            <span class="flex items-center gap-[4px] ml-[5px]"><svg class="w-[12px] h-[12px]" fill="none" stroke="currentColor" stroke-width="1.800"><use href="#i-phone"/></svg>5551444</span>
            <span class="flex items-center gap-[5px] tracking-[-0.3px]"><svg class="w-[12px] h-[12px]" fill="none" stroke="currentColor" stroke-width="1.800"><use href="#i-mail"/></svg>isaac.dewitt.1ec4be750f@d...</span>
            <span class="w-full">· CO</span>
          </div>
          <div class="mt-[9px] flex flex-wrap gap-x-[5px] gap-y-[5px] text-[11.5px] font-medium">
            <span class="h-[21px] px-[9px] rounded-full border border-[#e4e4e4] text-[#555] line-through flex items-center">Married</span>
            <span class="h-[21px] px-[7px] rounded-full border border-dashed border-[#dddddd] text-[#777] font-normal [word-spacing:3px] flex items-center">25+ ?</span>
            <span class="h-[21px] px-[9px] rounded-full border border-[#e4e4e4] text-[#555] line-through flex items-center">Children</span>
            <span class="h-[21px] px-[9px] rounded-full border-[1.5px] border-[#1f4d3a] text-[#1f4d3a] flex items-center">Homeowner</span>
            <span class="h-[21px] px-[9px] rounded-full border-[1.5px] border-[#1f4d3a] text-[#1f4d3a] flex items-center">Occupation</span>
          </div>
          <div class="mt-[10px] flex items-start gap-[9px] text-[13px] font-semibold">
            <button class="w-[138px] h-[44px] rounded-[4px] border border-[#e6e6e6] bg-white text-[#1f4d3a] flex items-center pl-[14px] pr-[14px] gap-[8px]"><svg class="w-[16px] h-[16px] shrink-0" fill="none" stroke="currentColor" stroke-width="1.800"><use href="#i-calclock"/></svg><span class="flex-1 text-center leading-[16.500px]">Follow-up · overdue</span></button>
            <button class="w-[138px] h-[46px] rounded-[4px] bg-[#1f4d3a] text-white flex items-center pl-[14px] pr-[14px] gap-[9px]"><svg class="w-[16px] h-[16px] shrink-0" fill="none" stroke="currentColor" stroke-width="1.800"><use href="#i-play"/></svg><span class="flex-1 text-center leading-[19px]">Start advisory</span></button>
          </div>
        </div>
      </div>
    </div>

    <!-- Lost -->
    <div class="w-[333px] shrink-0 rounded-t-[12px] bg-[#f9f9f9] border border-[#f1f1f1]">
      <div class="h-[41px] px-[13px] flex items-center gap-[10px] border-b border-[#ececec]">
        <span class="text-[14px] font-semibold text-[#333]">Lost</span>
        <span class="w-[22px] h-[22px] rounded-full bg-[#f2f2f2] text-[13px] text-[#555] flex items-center justify-center">0</span>
      </div>
      <div class="px-[9px] pt-[10px]">
        <div class="w-[178px] h-[106px] rounded-[10px] border border-dashed border-[#dedede] flex items-center justify-center text-[12px] text-[#777]">Drop a lead here</div>
      </div>
    </div>
  </div>

  <!-- Floating dock -->
  <div class="absolute left-[1362px] top-[942px] w-[220px] h-[40px] rounded-full bg-[#0a2145] shadow-[0_4px_12px_rgba(0,0,0,0.18)] flex items-center justify-between px-[13px] text-[#dfe6f0]">
    <svg class="w-[17px] h-[17px]" fill="none" stroke="currentColor" stroke-width="1.800"><use href="#i-headphones"/></svg>
    <svg class="w-[17px] h-[17px]" fill="none" stroke="currentColor" stroke-width="1.800"><use href="#i-note"/></svg>
    <svg class="w-[17px] h-[17px]" fill="none" stroke="currentColor" stroke-width="1.800"><use href="#i-message"/></svg>
    <div class="relative w-[17px] h-[17px]">
      <svg class="w-[17px] h-[17px]" fill="none" stroke="currentColor" stroke-width="1.800"><use href="#i-bell"/></svg>
      <span class="absolute -top-[9px] left-[8px] w-[16px] h-[16px] rounded-full bg-[#b5101f] text-white text-[9px] font-bold flex items-center justify-center">11</span>
    </div>
    <svg class="w-[17px] h-[17px]" fill="none" stroke="currentColor" stroke-width="1.800"><use href="#i-clock"/></svg>
    <svg class="w-[17px] h-[17px]" fill="none" stroke="currentColor" stroke-width="1.800"><use href="#i-shield"/></svg>
  </div>
</body>
</html>
